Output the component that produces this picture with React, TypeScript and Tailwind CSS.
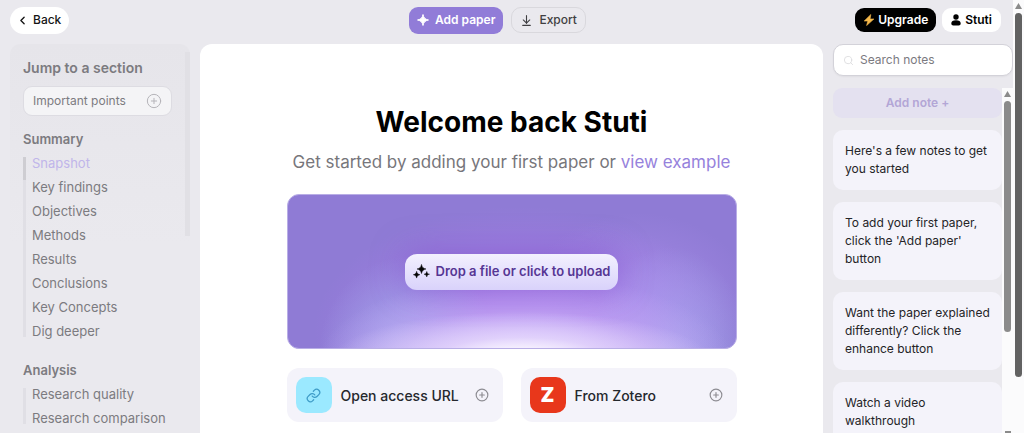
import { ArrowDownToLine, ChevronLeft, CirclePlus, Link, Search } from 'lucide-react'
import type { ReactNode } from 'react'

type Section = { title: string; items: string[] }

const sections: Section[] = [
  {
    title: 'Summary',
    items: ['Snapshot', 'Key findings', 'Objectives', 'Methods', 'Results', 'Conclusions', 'Key Concepts', 'Dig deeper'],
  },
  { title: 'Analysis', items: ['Research quality', 'Research comparison'] },
]

const notes = [
  "Here's a few notes to get you started",
  "To add your first paper, click the 'Add paper' button",
  'Want the paper explained differently? Click the enhance button',
  'Watch a video walkthrough',
]

function Star({ className }: { className: string }) {
  return (
    <svg viewBox="0 0 24 24" fill="currentColor" className={className} aria-hidden="true">
      <path d="M12 1c1.500 7 4 9.500 11 11-7 1.500-9.500 4-11 11-1.500-7-4-9.500-11-11 7-1.500 9.500-4 11-11z" stroke="currentColor" strokeWidth="2" strokeLinejoin="round" />
    </svg>
  )
}

function Sparkles() {
  return (
    <svg viewBox="0 0 18 16" fill="#050505" className="h-[15px] w-[17px]" aria-hidden="true">
      <path d="M9 .4c.7 3.200 1.900 4.200 4.800 4.900C10.900 6 9.700 7 9 10.200 8.300 7 7.100 6 4.200 5.300 7.100 4.600 8.300 3.600 9 .4z" stroke="#050505" strokeWidth=".5" />
      <path d="M3.800 7.800c.5 2.400 1.400 3.100 3.500 3.600-2.100.5-3 1.200-3.500 3.600-.5-2.400-1.400-3.100-3.500-3.600 2.100-.5 3-1.200 3.500-3.600z" stroke="#050505" strokeWidth=".5" />
      <path d="M14.600 8c.4 1.900 1.100 2.500 2.900 2.900-1.800.4-2.500 1-2.900 2.900-.4-1.900-1.100-2.500-2.900-2.900 1.800-.4 2.500-1 2.900-2.900z" stroke="#050505" strokeWidth=".5" />
    </svg>
  )
}

function Bolt() {
  return (
    <svg viewBox="0 0 12 12" className="size-3" aria-hidden="true">
      <path d="M7.800.5 1.200 7h3.600L3.600 11.600 10.900 5H7.100z" fill="#f5b84b" stroke="#f5b84b" strokeWidth=".6" strokeLinejoin="round" />
    </svg>
  )
}

function Person() {
  return (
    <svg viewBox="0 0 10 12" fill="#000" className="h-3 w-[10px]" aria-hidden="true">
      <circle cx="5" cy="3" r="2.700" />
      <path d="M.3 9.500C.3 7.500 2 6.300 5 6.300s4.700 1.200 4.700 3.200c0 1.300-.8 2-2 2H2.300c-1.200 0-2-.7-2-2z" />
    </svg>
  )
}

function TopBar() {
  return (
    <header className="grid h-11 shrink-0 grid-cols-[1fr_auto_1fr] items-center pr-3 pb-1 pl-[10px] text-[12px]">
      <div>
        <button className="flex h-[27px] items-center gap-1 rounded-full bg-white pr-2 pl-1.5 font-medium text-[#151515]">
          <ChevronLeft size={13} strokeWidth={2.5} />
          Back
        </button>
      </div>
      <div className="flex items-center gap-2 pr-4">
        <button className="flex h-[27px] items-center gap-1.5 rounded-[9px] bg-[#917cd8] px-2 font-semibold text-white">
          <Star className="size-3" />
          Add paper
        </button>
        <button className="flex h-[26px] items-center gap-1.5 rounded-[10px] border border-[#d9d8dd] px-2 font-medium text-[#3f3f42]">
          <ArrowDownToLine size={13} strokeWidth={2} />
          Export
        </button>
      </div>
      <div className="flex justify-end gap-1.5">
        <button className="flex h-6 items-center gap-[3px] rounded-[9px] bg-black px-2 font-semibold text-white">
          <Bolt />
          Upgrade
        </button>
        <button className="flex h-6 items-center gap-1 rounded-[9px] bg-white px-[9px] font-semibold text-black">
          <Person />
          Stuti
        </button>
      </div>
    </header>
  )
}

function Sidebar() {
  return (
    <aside className="w-[180px] shrink-0">
      <div className="flex rounded-t-[10px] bg-[linear-gradient(#e6e5ea,#eae9ee_200px)]">
        <nav className="min-w-0 flex-1 px-[13px] pt-3 text-[#7c7b80]">
          <h2 className="text-[14px] leading-6 font-semibold">Jump to a section</h2>
          <button className="mt-1.5 flex h-[30px] w-full items-center justify-between rounded-[9px] border border-[#dddce2] bg-[#f4f4f6] px-[9px] text-[12px]">
            Important points
            <CirclePlus size={16} strokeWidth={1.5} className="text-[#b5b4b9]" />
          </button>
          {sections.map((s, idx) => (
            <section key={s.title} className={idx === 0 ? 'mt-[11px]' : 'mt-[15px]'}>
              <h3 className="text-[13px] leading-6 font-semibold">{s.title}</h3>
              <div className="flex gap-1.5">
                <div className="my-1.5 w-[3px] bg-[#e0dfe5]">
                  {idx === 0 && <div className="h-[23px] bg-[#cecdd2]" />}
                </div>
                <ul className="text-[13px] leading-6 whitespace-nowrap">
                  {s.items.map(item => (
                    <li key={item}>
                      <a href="#" className={item === 'Snapshot' ? 'text-[#c0b5ea]' : ''}>{item}</a>
                    </li>
                  ))}
                </ul>
              </div>
            </section>
          ))}
        </nav>
        <div className="mt-2 h-[184px] w-[5px] bg-[#e1e0e5]" />
      </div>
    </aside>
  )
}

function ImportTile({ icon, label }: { icon: ReactNode; label: string }) {
  return (
    <button className="flex h-[54px] min-w-0 flex-1 items-center gap-[9px] rounded-xl bg-[#f4f3fa] pr-[14px] pl-[9px] text-[14px] font-medium text-[#25282d]">
      {icon}
      <span className="whitespace-nowrap">{label}</span>
      <CirclePlus size={14} strokeWidth={2} className="ml-auto text-[#8d8c92]" />
    </button>
  )
}

function Welcome() {
  return (
    <main className="flex min-w-0 flex-1 flex-col items-center rounded-t-xl bg-white px-6 pt-[58px]">
      <h1 className="text-[28px] leading-10 font-bold text-black">Welcome back Stuti</h1>
      <p className="mt-2 text-[17px] leading-6 text-[#77767b]">
        Get started by adding your first paper or <a href="#" className="text-[#9682dc]">view example</a>
      </p>
      <div className="mt-5 w-full max-w-[450px]">
        <div className="flex h-[155px] items-center justify-center rounded-xl border border-[#b9aee6] bg-[#8f7bd5] bg-[radial-gradient(ellipse_42%_30%_at_52%_106%,#fbf8ff_15%,#e9dcfcb0_45%,#d8c4fa00_100%),radial-gradient(ellipse_46%_56%_at_53%_108%,#cfbbfb_25%,#c3a5f5b0_60%,#b48ff000_100%),radial-gradient(ellipse_26%_60%_at_78%_72%,#b191f0a0,#b191f000),radial-gradient(ellipse_20%_64%_at_27%_104%,#a2afeb,#9a98e600),radial-gradient(ellipse_18%_70%_at_85%_104%,#a2afeb,#9a98e600),radial-gradient(ellipse_46%_80%_at_52%_88%,#a87de9_25%,#9c76df00_100%)] bg-origin-border">
          <button className="flex h-9 items-center gap-1.5 rounded-xl bg-linear-to-b from-[#f3f0fe] to-[#d9d2fb] px-2 text-[13px] font-semibold text-[#563694] shadow-[0_-2px_32px_#8054ca90]">
            <Sparkles />
            Drop a file or click to upload
          </button>
        </div>
        <div className="mt-[19px] flex gap-[18px]">
          <ImportTile
            label="Open access URL"
            icon={
              <span className="flex size-9 shrink-0 items-center justify-center rounded-[10px] bg-[#9be9ff] text-[#3d9bc7]">
                <Link size={15} strokeWidth={2} />
              </span>
            }
          />
          <ImportTile
            label="From Zotero"
            icon={
              <span className="flex size-9 shrink-0 items-center justify-center rounded-[10px] bg-[#e8371b] text-[20px] font-black text-white">
                Z
              </span>
            }
          />
        </div>
      </div>
    </main>
  )
}

function NotesPanel() {
  return (
    <aside className="flex w-[180px] shrink-0 flex-col">
      <label className="flex h-8 shrink-0 items-center gap-1.5 rounded-[10px] border border-[#d3d2d9] bg-white px-[9px] shadow-xs">
        <Search size={11} className="shrink-0 text-[#dddddf]" />
        <input type="search" aria-label="Search notes" placeholder="Search notes" className="w-full min-w-0 bg-transparent text-[12px] outline-none placeholder:text-[#7b7a7f]" />
      </label>
      <div className="mt-3 flex min-h-0 flex-1">
        <div className="flex min-w-0 flex-1 flex-col gap-3 overflow-hidden">
          <button className="h-[30px] shrink-0 rounded-[9px] bg-[#e4e1f0] text-[12px] font-semibold text-[#b3a6d6]">Add note +</button>
          {notes.map(note => (
            <p key={note} className="shrink-0 rounded-[10px] bg-[#f4f3fa] p-3 text-[12px] leading-[18px] text-[#242427]">{note}</p>
          ))}
        </div>
        <ScrollTrack thumb="h-[67%] bg-[#8b8b8b]" end />
      </div>
    </aside>
  )
}

function ScrollTrack({ thumb, end }: { thumb: string; end?: boolean }) {
  return (
    <div className="flex w-[11px] shrink-0 flex-col items-center bg-[#fbfbfc]" aria-hidden="true">
      <svg viewBox="0 0 11 13" className="h-[13px] w-[11px] shrink-0" fill="#8b8b8b">
        <path d="M5.500 3 9 9H2z" />
      </svg>
      <div className={`w-[7px] rounded-full ${thumb}`} />
      {end && <div className="mt-auto h-0.5 w-1.5 bg-[#8b8b8b]" />}
    </div>
  )
}

export default function App() {
  return (
    <div className="flex h-screen overflow-hidden bg-[#eae9ee] font-['Inter',sans-serif]">
      <div className="flex min-w-0 flex-1 flex-col">
        <TopBar />
        <div className="flex min-h-0 flex-1 gap-[10px] pl-[10px]">
          <Sidebar />
          <Welcome />
          <NotesPanel />
        </div>
      </div>
      <div className="flex">
        <ScrollTrack thumb="h-[84%] bg-[#626262]" />
      </div>
    </div>
  )
}
